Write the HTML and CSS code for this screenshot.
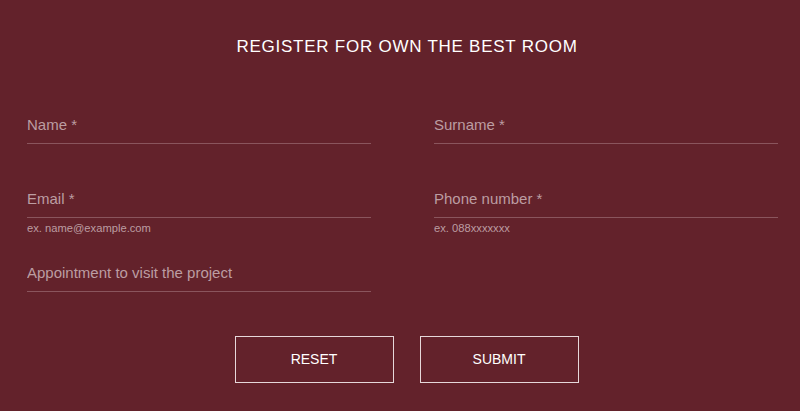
FILE: index.html
```html
<!DOCTYPE html>
<html lang="en">

<head>
  <meta charset="UTF-8">
  <meta name="viewport" content="width=device-width, initial-scale=1.0">
  <title>Register</title>
  <link rel="stylesheet" href="styles.css">
</head>

<body>
  <div class="container">
    <h1>REGISTER FOR OWN THE BEST ROOM</h1>

    <form id="registerForm">
      <div class="fields">
        <div class="field">
          <input type="text" id="name" name="name" placeholder="Name *" required>
          <span class="hint"></span>
        </div>
        <div class="field">
          <input type="text" id="surname" name="surname" placeholder="Surname *" required>
          <span class="hint"></span>
        </div>
        <div class="field">
          <input type="email" id="email" name="email" placeholder="Email *" required>
          <span class="hint">ex. name@example.com</span>
        </div>
        <div class="field">
          <input type="text" id="phone" name="phone" placeholder="Phone number *" required>
          <span class="hint">ex. 088xxxxxxx</span>
        </div>
        <div class="field">
          <input type="text" id="appointment" name="appointment" placeholder="Appointment to visit the project">
          <span class="hint"></span>
        </div>
      </div>

      <div class="buttons">
        <button type="reset">RESET</button>
        <button type="submit">SUBMIT</button>
      </div>
    </form>
  </div>
</body>

</html>
```

FILE: styles.css
```css
body {
  font-family: "Liberation Sans", Arial, sans-serif;
  margin: 0;
  padding: 0;
  background-color: #63222b;
  color: #fff;
}

.container {
  padding: 37px 22px 0 27px;
}

h1 {
  margin: 0 0 50px;
  font-size: 17px;
  font-weight: normal;
  line-height: 20px;
  letter-spacing: 0.75px;
  text-align: center;
  padding-left: 9px;
}

.fields {
  display: grid;
  grid-template-columns: 344px 344px;
  column-gap: 63px;
  row-gap: 19px;
}

.field {
  display: flex;
  flex-direction: column;
}

.field input {
  height: 37px;
  padding: 0 0 2px;
  margin: 0;
  border: none;
  border-bottom: 1px solid #8a555d;
  background: transparent;
  color: #fff;
  font-family: inherit;
  font-size: 15px;
  outline: none;
  box-sizing: border-box;
}

.field input::placeholder {
  color: #bc9da2;
}

.hint {
  height: 18px;
  padding-top: 4px;
  box-sizing: border-box;
  font-size: 11.2px;
  line-height: 13px;
  color: #bc9da2;
}

.buttons {
  display: flex;
  justify-content: center;
  gap: 26px;
  margin-top: 26px;
  padding-left: 8px;
}

button {
  width: 159px;
  height: 47px;
  padding: 0 0 2px;
  background: transparent;
  border: 1px solid #e6d8da;
  color: #fff;
  font-family: inherit;
  font-size: 14px;
  cursor: pointer;
}

button:hover {
  opacity: 0.8;
}
```
